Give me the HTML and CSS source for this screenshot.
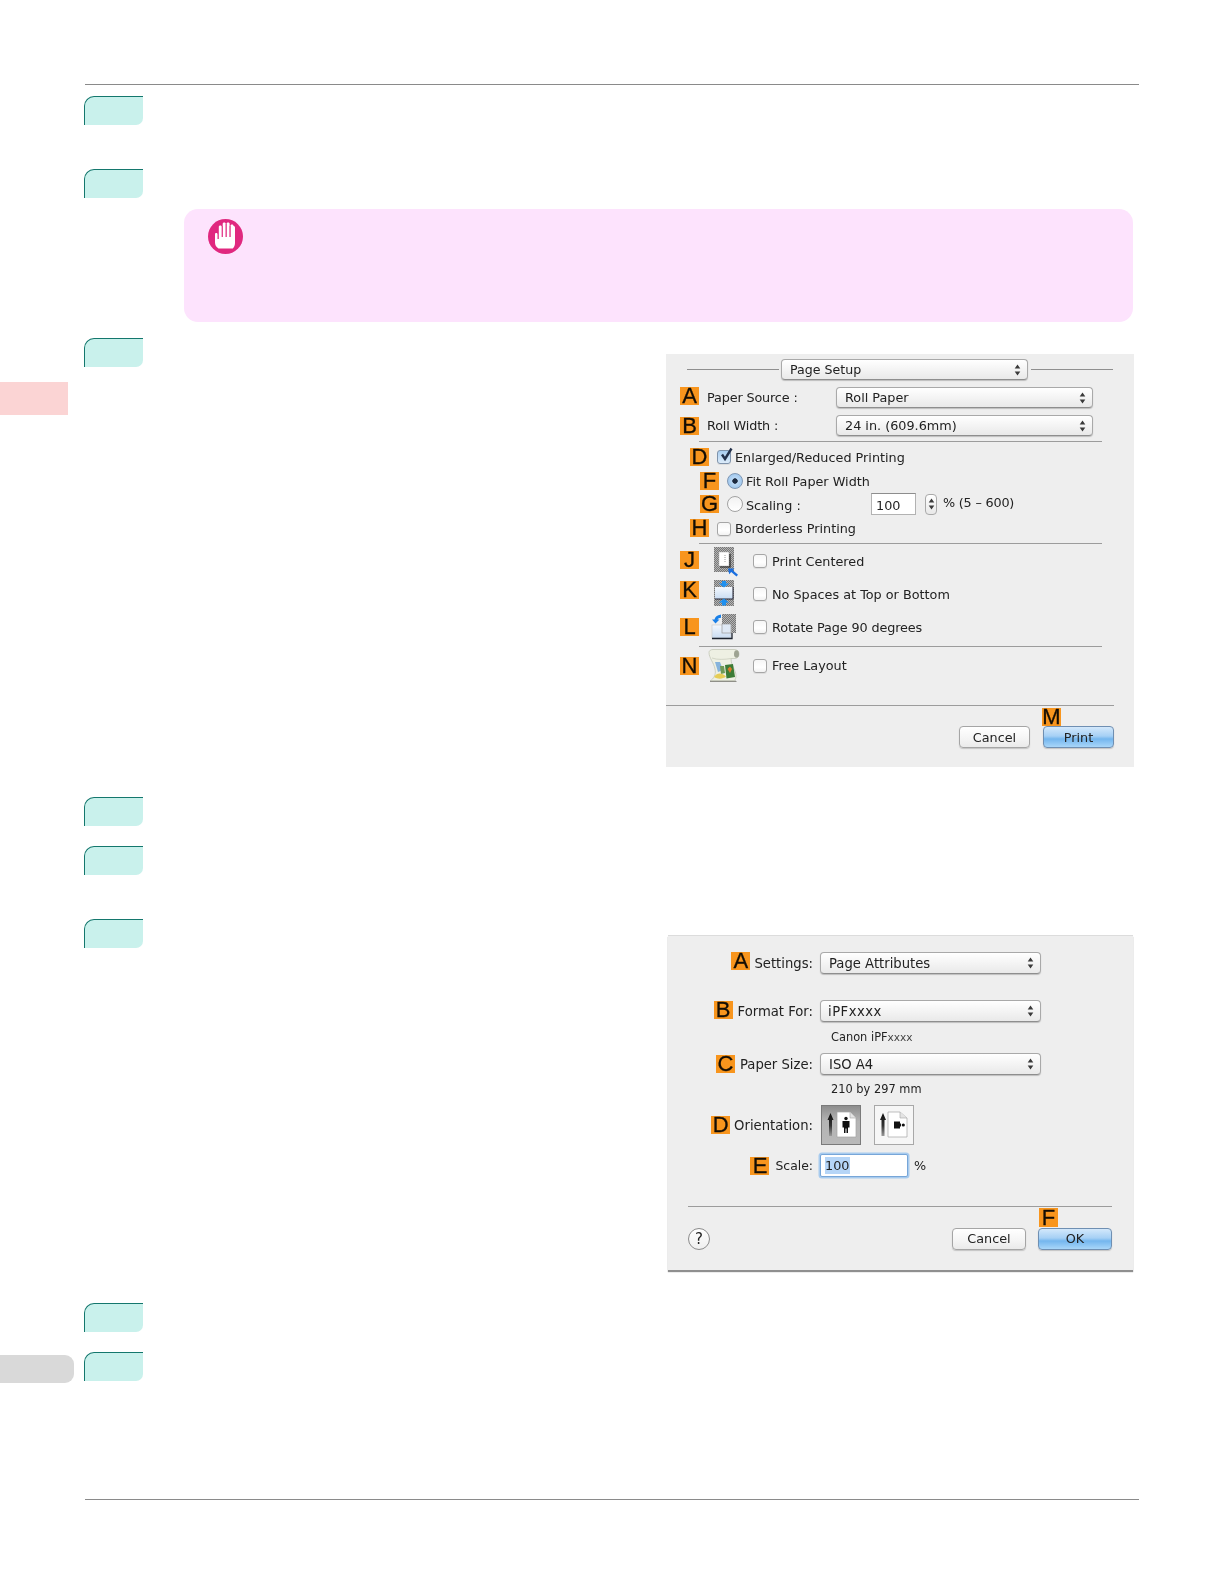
FILE: index.html
```html
<!DOCTYPE html>
<html lang="en">
<head>
<meta charset="utf-8">
<title>Page Setup</title>
<link rel="stylesheet" href="styles.css">
</head>
<body>
<svg class="defs" width="0" height="0" aria-hidden="true">
  <defs>
    <symbol id="updown" viewBox="0 0 7 12"><path d="M3.500 0.500 6.300 4.600H0.700z M3.500 11.500 6.300 7.400H0.700z" fill="#3a3a3a"/></symbol>
    <pattern id="dither" width="2" height="2" patternUnits="userSpaceOnUse"><rect width="2" height="2" fill="#b4b4b4"/><rect width="1" height="1" fill="#777"/><rect x="1" y="1" width="1" height="1" fill="#777"/></pattern>
    <linearGradient id="arrowfade" x1="0" y1="0" x2="0" y2="1"><stop offset="0" stop-color="#0c0c0c"/><stop offset=".55" stop-color="#333"/><stop offset="1" stop-color="#999"/></linearGradient>
    <linearGradient id="paleblue" x1="0" y1="0" x2="0" y2="1"><stop offset="0" stop-color="#f4f8fd"/><stop offset="1" stop-color="#c9dcf2"/></linearGradient>
  </defs>
</svg>
<div class="page">
  <aside class="rail">
    <div class="rail-pink"></div>
    <div class="rail-grey"></div>
  </aside>
  <main class="main">
    <div class="top-rule"></div>
    <div class="step step-1"><div class="tab"></div></div>
    <div class="step step-2"><div class="tab"></div></div>
    <section class="note">
      <svg class="note-icon" viewBox="0 0 35 35" width="35" height="35">
        <circle cx="17.500" cy="17.500" r="17.500" fill="#e0287f"/>
        <path d="M10.500 29.500C8.200 28 7 26 7 23.500V15.500C7 14.400 7.500 14 8.200 14S9.500 14.400 9.500 15.500V20H10.800V8C10.800 7 11.300 6.500 12.300 6.500S13.800 7 13.800 8V18H14.700V5C14.700 4 15.200 3.500 16.200 3.500S17.700 4 17.700 5V18H18.600V5C18.600 4 19.100 3.500 20.100 3.500S21.600 4 21.600 5V18H22.500V7C22.500 6 23 5.500 24 5.500S25.500 6 25.500 7H25.600C26.400 7 27 7.600 27 8.500V24C27 26.500 26 28.500 24.800 29.500Z" fill="#fff"/>
        <path d="M14.250 7V18M18.150 5V18M22.050 7V18" stroke="#e0287f" stroke-width=".7"/>
      </svg>
    </section>
    <div class="step step-3">
      <div class="tab"></div>
      <section class="dialog dialog-print">
        <div class="row title-row">
          <span class="rule-piece rule-left"></span>
          <div class="popup popup-title"><span>Page Setup</span><svg class="chev"><use href="#updown"/></svg></div>
          <span class="rule-piece rule-right"></span>
        </div>
        <div class="row row-a">
          <span class="badge">A</span><span class="field-label">Paper Source :</span>
          <div class="popup popup-wide"><span>Roll Paper</span><svg class="chev"><use href="#updown"/></svg></div>
        </div>
        <div class="row row-b">
          <span class="badge">B</span><span class="field-label">Roll Width :</span>
          <div class="popup popup-wide"><span>24 in. (609.6mm)</span><svg class="chev"><use href="#updown"/></svg></div>
        </div>
        <div class="sep sep-1"></div>
        <div class="row row-d">
          <span class="badge">D</span>
          <span class="check checked"><svg viewBox="0 0 16 16" width="16" height="16"><path d="M4 7.500 7 12 13.500 1.500" fill="none" stroke="#23304a" stroke-width="2.400"/></svg></span>
          <span class="opt">Enlarged/Reduced Printing</span>
        </div>
        <div class="row row-f">
          <span class="badge">F</span><span class="radio on"></span><span class="opt-r">Fit Roll Paper Width</span>
        </div>
        <div class="row row-g">
          <span class="badge">G</span><span class="radio"></span><span class="opt-r scaling">Scaling :</span>
          <span class="num">100</span>
          <span class="stepper"><svg class="chev"><use href="#updown"/></svg></span>
          <span class="range">% (5 – 600)</span>
        </div>
        <div class="row row-h">
          <span class="badge">H</span><span class="check"></span><span class="opt">Borderless Printing</span>
        </div>
        <div class="sep sep-2"></div>
        <div class="row row-j">
          <span class="badge">J</span>
          <svg class="icon icon-j" viewBox="0 0 20 25" width="20" height="25">
            <rect width="20" height="25" fill="url(#dither)"/>
            <rect x="5" y="5" width="10" height="14" fill="#fff" stroke="#aaa" stroke-width=".5"/>
            <path d="M6 20H16V7" fill="none" stroke="#222" stroke-width="1.100"/>
            <path d="M11 8V15" stroke="#999" stroke-dasharray="1 1"/>
            <path d="M14 21.500H20.500L18.800 23.300 24 27.800 22.500 29.500 17.200 25 15.200 27.300Z" fill="#1a6fe0"/>
          </svg>
          <span class="check"></span><span class="opt">Print Centered</span>
        </div>
        <div class="row row-k">
          <span class="badge">K</span>
          <svg class="icon icon-k" viewBox="0 0 20 26" width="20" height="26">
            <rect width="20" height="26" fill="url(#dither)"/>
            <rect x="1" y="7" width="18" height="12" fill="url(#paleblue)"/>
            <path d="M1 19H19V7" fill="none" stroke="#223" stroke-width="1"/>
            <path d="M8 1H12V3.500H15L10 7.500 5 3.500H8Z M10 18.500 15 22.500H12V25.500H8V22.500H5Z" fill="#1e90f0"/>
          </svg>
          <span class="check"></span><span class="opt">No Spaces at Top or Bottom</span>
        </div>
        <div class="row row-l">
          <span class="badge">L</span>
          <svg class="icon icon-l" viewBox="0 0 25 25" width="25" height="25">
            <rect x="11" y="0" width="14" height="19" fill="url(#dither)"/>
            <rect x="1" y="11" width="19" height="13" fill="url(#paleblue)" stroke="#c8c8c8" stroke-width=".6"/>
            <rect x="11" y="10" width="9" height="9" fill="#dfe9f5" stroke="#9a9a9a" stroke-width=".7"/>
            <path d="M1 24.500H21V19" fill="none" stroke="#1d2430" stroke-width="1.300"/>
            <path d="M10 .5C6 1 4 3 3.500 5.500H1L4.500 9.500 8.500 5.500H6.500C7 4.500 8.500 3.800 10 3.800Z" fill="#1a80e8"/>
          </svg>
          <span class="check"></span><span class="opt">Rotate Page 90 degrees</span>
        </div>
        <div class="sep sep-3"></div>
        <div class="row row-n">
          <span class="badge">N</span>
          <svg class="icon icon-n" viewBox="0 0 33 33" width="33" height="33">
            <path d="M3 31.500H28.500L30 33H3Z" fill="#8f8f88"/>
            <path d="M2 3.500C2 1.500 4 .5 6 .5H27C30 .5 32 2 32 5 32 8 30 9.500 28 9.500H24C24 14 26 18 27.500 21 29.500 25 29.500 29 27.500 31.500H4C8 28 9 24 8 20 7 14 2 9 2 3.500Z" fill="#eef0e3" stroke="#c3c6b6" stroke-width=".8"/>
            <ellipse cx="29.500" cy="5" rx="2.500" ry="3.800" fill="#9ea392"/>
            <path d="M5 9C10 11 18 10.500 24 9.500" fill="none" stroke="#d2d5c6"/>
            <path d="M18 16 26 15 28 28 19.500 29.500Z" fill="#3c7c36"/>
            <path d="M20.500 20 23 17.500 25 20 23 24Z" fill="#dd7a2c"/>
            <path d="M8 13 13 13 16 21 11 23Z" fill="#86b3dc"/>
            <path d="M13 17 17 17 18 24 14 25Z" fill="#6f9a55"/>
            <path d="M7 28C10 23.500 15 23.500 19 27.500 16 30 11 30.500 7 28Z" fill="#e6cd56"/>
          </svg>
          <span class="check"></span><span class="opt">Free Layout</span>
        </div>
        <div class="sep sep-full"></div>
        <div class="row buttons buttons-print">
          <span class="btn">Cancel</span>
          <span class="btn primary"><span class="badge badge-over badge-m">M</span>Print</span>
        </div>
      </section>
    </div>
    <div class="step step-4"><div class="tab"></div></div>
    <div class="step step-5"><div class="tab"></div></div>
    <div class="step step-6">
      <div class="tab"></div>
      <section class="dialog dialog-page">
        <div class="row pa-a">
          <div class="lead"><span class="badge">A</span><span class="lead-a">Settings:</span></div>
          <div class="popup popup-pa"><span>Page Attributes</span><svg class="chev"><use href="#updown"/></svg></div>
        </div>
        <div class="row pa-b">
          <div class="lead"><span class="badge">B</span><span class="lead-b">Format For:</span></div>
          <div class="popup popup-pa"><span class="tight">iPFxxxx</span><svg class="chev"><use href="#updown"/></svg></div>
        </div>
        <div class="sub sub-1">Canon iPF<span class="xs">xxxx</span></div>
        <div class="row pa-c">
          <div class="lead"><span class="badge">C</span><span class="lead-c">Paper Size:</span></div>
          <div class="popup popup-pa"><span>ISO A4</span><svg class="chev"><use href="#updown"/></svg></div>
        </div>
        <div class="sub sub-2">210 by 297 mm</div>
        <div class="row pa-d">
          <div class="lead"><span class="badge">D</span><span class="lead-d">Orientation:</span></div>
          <span class="toggle active">
            <svg viewBox="0 0 40 40" width="40" height="40">
              <path d="M9.500 8 12.500 15H11V31H8V15H6.500Z" fill="url(#arrowfade)"/>
              <path d="M16 7H29L35 13V32H16Z" fill="#fff" stroke="#a5a5a5" stroke-width=".7"/>
              <path d="M29 7V13H35" fill="#e4e4e4" stroke="#a5a5a5" stroke-width=".6"/>
              <circle cx="25" cy="13.500" r="1.700" fill="#111"/>
              <path d="M21.500 16H28.500V22.500H27V28H25.500V23.500H24.500V28H23V22.500H21.500Z" fill="#111"/>
            </svg>
          </span>
          <span class="toggle second">
            <svg viewBox="0 0 40 40" width="40" height="40">
              <path d="M9 8 12 15H10.500V31H7.500V15H6Z" fill="url(#arrowfade)"/>
              <path d="M14 7H26L33 13V32H14Z" fill="#fff" stroke="#a5a5a5" stroke-width=".7"/>
              <path d="M26 7V13H33" fill="#e4e4e4" stroke="#a5a5a5" stroke-width=".6"/>
              <path d="M20 16.500H26V18.500H27V21.500H26V23.500H20Z" fill="#111"/>
              <circle cx="29.300" cy="20" r="1.600" fill="#111"/>
            </svg>
          </span>
        </div>
        <div class="row pa-e">
          <div class="lead"><span class="badge">E</span><span class="lead-e">Scale:</span></div>
          <span class="scale-input"><span class="selected">100</span></span>
          <span class="pct">%</span>
        </div>
        <div class="sep sep-pa"></div>
        <div class="row buttons buttons-page">
          <span class="help">?</span>
          <span class="btn">Cancel</span>
          <span class="btn primary"><span class="badge badge-over badge-f">F</span>OK</span>
        </div>
      </section>
    </div>
    <div class="step step-7"><div class="tab"></div></div>
    <div class="step step-8"><div class="tab"></div></div>
    <div class="foot-rule"></div>
  </main>
</div>
</body>
</html>
```
FILE: styles.css
```css
html, body { margin: 0; padding: 0; background: #fff; }
body { font-family: "DejaVu Sans", sans-serif; font-size: 12.8px; color: #222; }
.defs { position: absolute; }

.page { display: flex; width: 1224px; height: 1584px; overflow: hidden; }

.rail { width: 84px; flex: none; padding-top: 382px; box-sizing: border-box; }
.rail-pink { width: 68px; height: 33px; background: #fbd4d4; }
.rail-grey { width: 74px; height: 28px; margin-top: 940px; background: #d9d9d9; border-radius: 0 9px 9px 0; }

.main { width: 1055px; flex: none; padding-top: 84px; box-sizing: border-box; }
.top-rule { height: 1px; margin-left: 1px; background: #8a8a8a; }

.step { display: flex; justify-content: space-between; align-items: flex-start; }
.tab { width: 59px; height: 29px; box-sizing: border-box; flex: none; background: #c9f1ec;
  border-top: 1.5px solid #14776d; border-left: 1.5px solid #14776d; border-radius: 10px 0 7px 0; }
.step-1 { margin-top: 11px; }
.step-2 { margin-top: 44px; }
.step-3 { margin-top: 16px; }
.step-4 { margin-top: 30px; }
.step-5 { margin-top: 20px; }
.step-6 { margin-top: 44px; }
.step-7 { margin-top: 33px; }
.step-8 { margin-top: 20px; }
.foot-rule { margin: 118px 0 0 1px; height: 1px; background: #8a8a8a; }

.note { margin: 11px 0 0 100px; width: 949px; height: 113px; box-sizing: border-box; padding: 10px 0 0 24px;
  background: #fde3fd; border-radius: 14px; }
.note-icon { display: block; filter: blur(.35px); }

.dialog { background: #eeeeee; flex: none; filter: blur(.35px); }
.dialog-print { width: 468px; height: 413px; margin: 16px 5px 0 0; }
.dialog-page { width: 465px; height: 335px; margin: 16px 6px 0 0; border-top: 1px solid #dcdcdc; box-sizing: border-box;
  box-shadow: 0 2px 1px #8f8f8f; }

.row { display: flex; align-items: center; }
.badge { width: 19px; height: 18px; flex: none; background: #f8951d; color: #140e05; display: flex; align-items: center; justify-content: center;
  font: 400 22px/18px "Liberation Sans", sans-serif; -webkit-text-stroke: .3px #140e05; letter-spacing: 0; }
.badge-over { position: absolute; }
.badge-m { left: -2px; top: -19px; }
.badge-f { left: 0; top: -21px; height: 19px; }

.popup { display: flex; align-items: center; justify-content: space-between; box-sizing: border-box; flex: none;
  border: 1px solid #a9a9a9; border-bottom-color: #8e8e8e; border-radius: 4px; background: linear-gradient(#fff, #f4f4f4 50%, #e9e9e9);
  box-shadow: 0 1px 1px #bdbdbd; padding: 0 6px 0 8px; }
.chev { width: 7px; height: 12px; flex: none; display: block; }

.rule-piece { height: 1px; background: #8f8f8f; flex: none; }
.rule-left { width: 92px; margin-left: 21px; margin-right: -6px; }
.rule-right { width: 82px; margin-left: 3px; }
.title-row { height: 21px; padding-top: 5px; }
.popup-title { width: 247px; height: 21px; margin-left: 8px; position: relative; font-size: 12.6px; }
.popup-wide { width: 257px; height: 21px; }

.row-a, .row-b { height: 21px; padding-left: 14px; }
.row-a { margin-top: 7px; }
.row-b { margin-top: 7px; }
.row-a .badge { margin-bottom: 3px; }
.field-label { width: 129px; margin-left: 8px; flex: none; letter-spacing: -.15px; }

.sep { height: 1px; background: #9c9c9c; }
.sep-1 { margin: 5px 0 0 33px; width: 403px; }
.sep-2 { margin: 5px 0 0 33px; width: 403px; }
.sep-3 { margin: 7px 0 0 33px; width: 403px; }
.sep-full { margin-top: 23px; width: 448px; }

.check { width: 14px; height: 14px; box-sizing: border-box; flex: none; position: relative; margin-left: 8px;
  border: 1px solid #a6a6a6; border-radius: 3px; background: linear-gradient(#f6f6f6, #fff 60%, #f2f2f2); box-shadow: 0 1px 0 #ddd; }
.check.checked { background: linear-gradient(#a9cdf0, #dcebf9); border-color: #7f93ab; }
.check svg { position: absolute; left: 0; top: -4px; }
.opt { margin-left: 4px; }

.radio { width: 16px; height: 16px; box-sizing: border-box; flex: none; margin-left: 8px; border-radius: 50%;
  border: 1px solid #a2a2a2; background: linear-gradient(#f2f2f2, #fff); position: relative; }
.radio.on { border-color: #7f97b4; background: radial-gradient(circle, #1c2a40 0 2.4px, #bcd9f5 3px, #8fbde9 100%); }
.opt-r { margin-left: 3px; }

.row-d { height: 20px; margin-top: 5px; padding-left: 24px; }
.row-f { height: 20px; margin-top: 4px; padding-left: 34px; }
.row-g { height: 22px; margin-top: 2px; padding-left: 34px; }
.row-h { height: 20px; margin-top: 3px; padding-left: 24px; }
.row-h .check { margin-top: 1px; }
.scaling { width: 125px; flex: none; margin-top: 2px; }
.num { width: 45px; height: 22px; box-sizing: border-box; border: 1px solid #b2b2b2; border-top-color: #8d8d8d; background: #fff; flex: none; padding: 3px 0 0 4px; line-height: 17px; }
.stepper { width: 12px; height: 21px; box-sizing: border-box; margin-left: 9px; border: 1px solid #a9a9a9; border-radius: 4px; background: linear-gradient(#fff, #e8e8e8); display: flex; align-items: center; justify-content: center; flex: none; }
.range { margin: 0 0 4px 6px; letter-spacing: -.2px; }

.row-j, .row-k, .row-l, .row-n { padding-left: 14px; }
.row-j { height: 25px; margin-top: 3px; }
.row-k { height: 26px; margin-top: 8px; }
.row-l { height: 25px; margin-top: 8px; }
.row-n { height: 33px; margin-top: 2px; }
.row-k .badge { margin-bottom: 6px; }
.icon { flex: none; display: block; overflow: visible; }
.icon-j { margin-left: 15px; }
.icon-k { margin-left: 15px; }
.icon-l { margin-left: 12px; }
.icon-n { margin-left: 8px; }
.row-j .check { margin-left: 19px; margin-top: 3px; }
.row-k .check { margin-left: 19px; margin-top: 2px; }
.row-l .check { margin-left: 17px; margin-top: 1px; }
.row-n .check { margin-left: 13px; }
.row-j .opt, .row-k .opt, .row-l .opt, .row-n .opt { margin-left: 5px; }
.row-j .opt { margin-top: 3px; }
.row-k .opt { margin-top: 2px; }
.row-l .opt { margin-top: 1px; letter-spacing: -.13px; }

.buttons { justify-content: flex-end; }
.buttons-print { margin-top: 20px; padding-right: 20px; gap: 13px; }
.buttons-print .btn { width: 71px; }
.btn { position: relative; height: 22px; box-sizing: border-box; flex: none; display: flex; align-items: center; justify-content: center;
  border: 1px solid #a5a5a5; border-radius: 4px; background: linear-gradient(#fff, #f5f5f5 55%, #eaeaea); box-shadow: 0 1px 1px #c4c4c4; }
.btn.primary { border-color: #6f8fb2; background: linear-gradient(#d3e8fb, #a6d0f5 45%, #74b6ee 60%, #a8d6f9); }

.lead { width: 145px; flex: none; display: flex; justify-content: flex-end; align-items: center; font-size: 13.2px; }
.lead-a { margin-left: 4px; }
.lead-b { margin-left: 5px; }
.lead-c { margin-left: 5px; }
.lead-d { margin-left: 4px; }
.lead-e { margin-left: 6px; font-size: 12.4px; }
.popup-pa { width: 221px; height: 22px; margin-left: 7px; font-size: 13.2px; }
.pa-a { margin-top: 16px; }
.pa-a .badge { margin-bottom: 4px; }
.pa-b { margin-top: 26px; }
.pa-b .badge { margin-bottom: 3px; }
.pa-c { margin-top: 9px; }
.tight { margin-left: -1px; letter-spacing: .5px; }
.sub { padding-left: 163px; height: 14px; line-height: 14px; font-size: 11.4px; }
.xs { font-size: 10.6px; color: #444; }
.sub-1 { margin-top: 8px; }
.sub-2 { margin-top: 7px; }
.pa-d { margin-top: 9px; height: 40px; }
.toggle { width: 40px; height: 40px; box-sizing: border-box; flex: none; border: 1px solid #a8a8a8; }
.toggle svg { display: block; margin: -1px; }
.toggle.active { margin-left: 8px; background: linear-gradient(#8d8d8d, #b4b4b4 40%, #b9b9b9); border-color: #7a7a7a; }
.toggle.second { margin-left: 13px; background: #f6f6f6; }
.pa-e { margin-top: 9px; height: 23px; }
.scale-input { width: 88px; height: 23px; box-sizing: border-box; margin-left: 7px; flex: none; background: #fff; border: 1px solid #77a6d8; box-shadow: 0 0 0 1.5px #a8cbee; border-radius: 2px; padding: 2px 0 0 4px; line-height: 17px; }
.selected { background: #b5d5f7; display: inline-block; padding-right: 1px; }
.pct { margin-left: 6px; }
.sep-pa { margin: 29px 0 0 20px; width: 424px; }
.buttons-page { margin-top: 21px; padding: 0 21px 0 20px; gap: 12px; }
.buttons-page .btn { width: 74px; padding-bottom: 2px; }
.help { width: 22px; height: 22px; box-sizing: border-box; border: 1px solid #8c8c8c; border-radius: 50%; background: linear-gradient(#fff, #efefef); margin-right: auto; display: flex; align-items: center; justify-content: center; font-size: 15px; }
```
